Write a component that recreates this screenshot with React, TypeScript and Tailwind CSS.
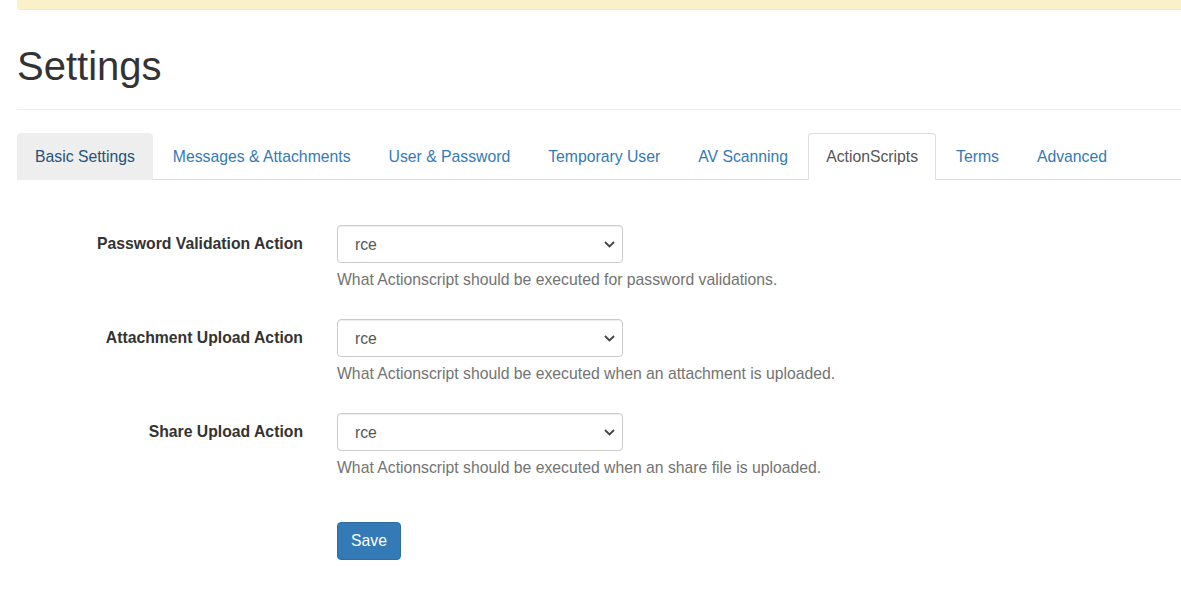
import React from 'react';

const tabs = [
  { label: 'Basic Settings', state: 'hover' },
  { label: 'Messages & Attachments', state: 'link' },
  { label: 'User & Password', state: 'link' },
  { label: 'Temporary User', state: 'link' },
  { label: 'AV Scanning', state: 'link' },
  { label: 'ActionScripts', state: 'active' },
  { label: 'Terms', state: 'link' },
  { label: 'Advanced', state: 'link' },
];

const actions = [
  {
    label: 'Password Validation Action',
    help: 'What Actionscript should be executed for password validations.',
  },
  {
    label: 'Attachment Upload Action',
    help: 'What Actionscript should be executed when an attachment is uploaded.',
  },
  {
    label: 'Share Upload Action',
    help: 'What Actionscript should be executed when an share file is uploaded.',
  },
];

function ScriptSelect() {
  return (
    <div className="relative w-[286px]">
      <select
        defaultValue="rce"
        className="block h-[38px] w-full appearance-none rounded-[4px] border border-[#ccc] bg-white pl-[17px] pt-px text-[15.75px] text-[#555] shadow-[inset_0_1px_1px_rgba(0,0,0,0.075)] outline-none"
      >
        <option value="rce">rce</option>
      </select>
      <svg
        className="pointer-events-none absolute right-[8px] top-[16px] h-[7px] w-[11px]"
        viewBox="0 0 11 7"
        fill="none"
        stroke="#444"
        strokeWidth="1.8"
      >
        <path d="M1 1l4.5 4.5L10 1" />
      </svg>
    </div>
  );
}

export default function App() {
  return (
    <div className="min-h-screen overflow-hidden bg-white pl-[17px] font-['Liberation_Sans',Arial,sans-serif] text-[15.75px] text-[#333]">
      {/* warning strip */}
      <div className="h-[10px] rounded-bl-[4px] border-b border-[#f1e8c8] bg-[#faf1c8]" />

      <div className="border-b border-[#eee] pt-[34px] pb-[21px]">
        <h1 className="text-[40px] leading-[44px] font-normal">Settings</h1>
      </div>

      <ul className="mt-[23px] flex border-b border-[#ddd]">
        {tabs.map((tab) => (
          <li key={tab.label} className="-mb-px mr-[2px]">
            <a
              href="#"
              className={`block rounded-t-[4px] border px-[17px] py-[10px] leading-[25px] ${
                tab.state === 'active'
                  ? 'border-[#ddd] border-b-transparent bg-white text-[#555]'
                  : tab.state === 'hover'
                  ? 'border-[#eee] bg-[#eee] text-[#23527c]'
                  : 'border-transparent text-[#337ab7]'
              }`}
            >
              {tab.label}
            </a>
          </li>
        ))}
      </ul>

      <form className="mt-[45px] flex flex-col gap-[27px]">
        {actions.map((a) => (
          <div key={a.label} className="flex gap-[34px]">
            <label className="w-[286px] shrink-0 pt-[7px] text-right font-bold leading-6">
              {a.label}
            </label>
            <div>
              <ScriptSelect />
              <p className="mt-[5px] leading-6 text-[#737373]">{a.help}</p>
            </div>
          </div>
        ))}
        <div className="mt-[15px] pl-[320px]">
          <button
            type="button"
            className="h-[38px] rounded-[4px] border border-[#2e6da4] bg-[#337ab7] px-[13px] text-white"
          >
            Save
          </button>
        </div>
      </form>
    </div>
  );
}
